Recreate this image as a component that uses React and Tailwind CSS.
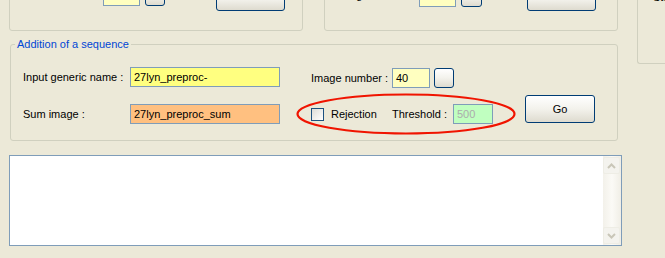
const BTN = 'rounded-[3px] border border-[#003c74] bg-linear-to-b from-[#ffffff] via-[#f3f2ec] to-[#dedbcf] flex items-center justify-center text-black';
const INPUT = 'h-[20px] border border-[#7f9db9] pl-[3px] flex items-center';

function ArrowUp() {
  return (
    <svg width="9" height="6" viewBox="0 0 9 6">
      <path d="M1 5 L4.5 1.5 L8 5" fill="none" stroke="#c9c6b8" strokeWidth="2" />
    </svg>
  );
}

function ArrowDown() {
  return (
    <svg width="9" height="6" viewBox="0 0 9 6">
      <path d="M1 1 L4.5 4.5 L8 1" fill="none" stroke="#c9c6b8" strokeWidth="2" />
    </svg>
  );
}

export default function App() {
  return (
    <div className="relative w-[665px] h-[258px] overflow-hidden bg-[#ece9d8] flex font-['Liberation_Sans',Arial,sans-serif] text-[11px] leading-[13px] text-black">
      {/* Left column */}
      <div className="w-[621px] shrink-0 pl-[9px] flex flex-col">
        {/* Top row (cut off) */}
        <div className="flex mt-[-60px] h-[91px] shrink-0">
          <div className="w-[294px] h-full border border-[#d0d0bf] rounded-[3px] flex items-end pl-[13px]">
            <div className="flex items-center mb-[24px]">
              <span className="w-[80px] mb-[7px]">Image number :</span>
              <div className={`${INPUT} w-[37px] bg-[#ffffc0]`}></div>
              <div className={`${BTN} ml-[5px] w-[20px] h-[20px]`}></div>
            </div>
            <div className={`${BTN} ml-[51px] mb-[19px] w-[69px] h-[23px] pb-[7px]`}>Go</div>
          </div>
          <div className="ml-[21px] w-[294px] h-full border border-[#d0d0bf] rounded-[3px] flex items-end pl-[13px]">
            <div className="flex items-center mb-[23px]">
              <span className="w-[81px] mb-[4px]">Image number :</span>
              <div className={`${INPUT} w-[37px] bg-[#ffffc0] items-start pt-[1px]`}>27</div>
              <div className={`${BTN} ml-[5px] w-[21px] h-[20px]`}></div>
            </div>
            <div className={`${BTN} ml-[45px] mb-[19px] w-[69px] h-[23px]`}></div>
          </div>
        </div>

        {/* Addition of a sequence */}
        <fieldset className="mt-[7px] ml-[1px] w-[608px] h-[103px] shrink-0 border border-[#d0d0bf] rounded-[3px]">
          <legend className="ml-[4px] px-[2px] text-[#0046d5] leading-[13px]">Addition of a sequence</legend>
          <div className="pt-[16px] pl-[12px] flex flex-col">
            <div className="flex items-center h-[20px]">
              <span className="w-[107px]">Input generic name :</span>
              <div className={`${INPUT} w-[150px] bg-[#ffff80]`}>27lyn_preproc-</div>
              <span className="ml-[31px] w-[81px] mt-[2px]">Image number :</span>
              <div className={`${INPUT} w-[38px] bg-[#ffffc0] mt-[2px]`}>40</div>
              <div className={`${BTN} ml-[4px] w-[20px] h-[20px] mt-[2px]`}></div>
            </div>
            <div className="flex items-start mt-[8px]">
              <div className="flex items-center h-[20px] mt-[9px]">
                <span className="w-[107px]">Sum image :</span>
                <div className={`${INPUT} w-[150px] bg-[#ffc080]`}>27lyn_preproc_sum</div>
                <div className="ml-[31px] w-[13px] h-[13px] border border-[#1c5180] bg-linear-to-br from-[#dcdcd7] to-[#ffffff]"></div>
                <span className="ml-[7px] w-[61px]">Rejection</span>
                <span className="w-[61px]">Threshold :</span>
                <div className={`${INPUT} w-[40px] bg-[#c0ffc0] text-[#acacac]`}>500</div>
              </div>
              <div className={`${BTN} ml-[32px] w-[70px] h-[28px]`}>Go</div>
            </div>
          </div>
        </fieldset>

        {/* Log textarea */}
        <div className="mt-[14px] w-[613px] h-[91px] shrink-0 border border-[#7f9db9] bg-white flex justify-end">
          <div className="w-[18px] h-full bg-linear-to-r from-[#f3f1ea] via-[#fbfaf6] to-[#f0eee6] flex flex-col justify-between py-[1px] pr-[1px]">
            <div className="h-[17px] rounded-[2px] border border-[#eeede5] bg-[#f4f3ee] flex items-center justify-center"><ArrowUp /></div>
            <div className="h-[17px] rounded-[2px] border border-[#eeede5] bg-[#f4f3ee] flex items-center justify-center"><ArrowDown /></div>
          </div>
        </div>
      </div>

      {/* Right column (cut off) */}
      <div className="ml-[16px] mt-[-60px] w-[60px] h-[124px] shrink-0 border-l border-b border-[#d0d0bf] rounded-bl-[3px] pl-[15px] pt-[51px]">
        <span>Start</span>
      </div>

      {/* Red annotation ellipse */}
      <svg className="absolute left-0 top-0 pointer-events-none" width="665" height="258">
        <ellipse cx="406" cy="114" rx="108.5" ry="19.5" fill="none" stroke="#f01400" strokeWidth="2.2" />
      </svg>
    </div>
  );
}
